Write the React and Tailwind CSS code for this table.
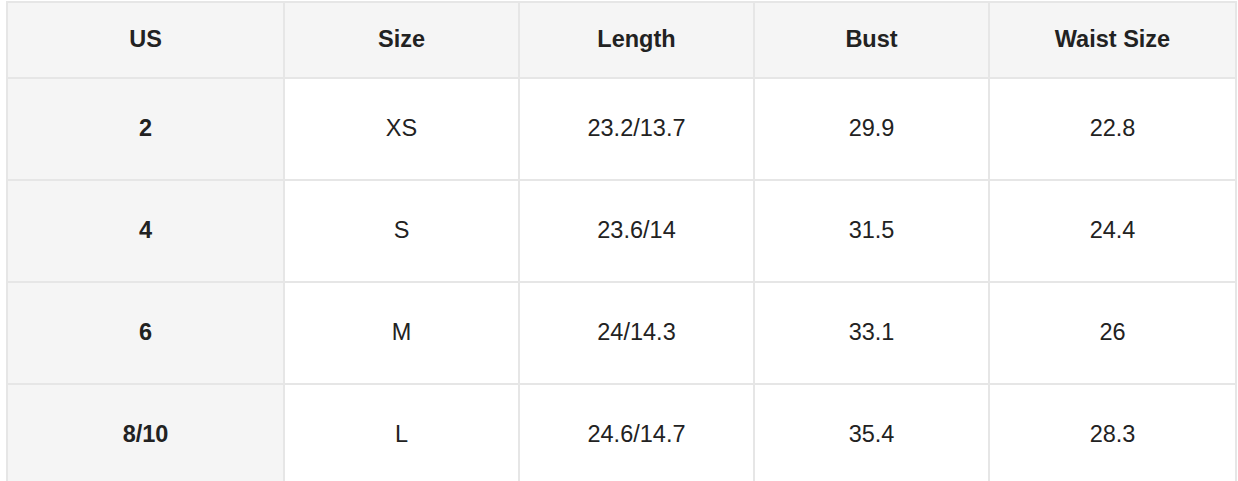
import React from "react";

const rows = [
  ["2", "XS", "23.2/13.7", "29.9", "22.8"],
  ["4", "S", "23.6/14", "31.5", "24.4"],
  ["6", "M", "24/14.3", "33.1", "26"],
  ["8/10", "L", "24.6/14.7", "35.4", "28.3"],
];

const headers = ["US", "Size", "Length", "Bust", "Waist Size"];

export default function App() {
  return (
    <div className="min-h-screen bg-white pl-[6px] pt-[1px] font-['Liberation_Sans',Arial,sans-serif] text-[#222]">
      <table className="w-[1231px] border-collapse table-fixed text-[23.5px]">
        <colgroup>
          <col className="w-[277px]" />
          <col className="w-[235px]" />
          <col className="w-[235px]" />
          <col className="w-[235px]" />
          <col />
        </colgroup>
        <thead>
          <tr className="h-[76px] bg-[#f5f5f5]">
            {headers.map((h) => (
              <th key={h} className="border-2 border-[#e6e6e6] text-center font-bold">
                {h}
              </th>
            ))}
          </tr>
        </thead>
        <tbody>
          {rows.map((r) => (
            <tr key={r[0]} className="h-[102px]">
              {r.map((c, i) => (
                <td
                  key={i}
                  className={
                    i === 0
                      ? "border-2 border-[#e6e6e6] bg-[#f5f5f5] text-center font-bold"
                      : "border-2 border-[#e6e6e6] text-center"
                  }
                >
                  {c}
                </td>
              ))}
            </tr>
          ))}
        </tbody>
      </table>
    </div>
  );
}
